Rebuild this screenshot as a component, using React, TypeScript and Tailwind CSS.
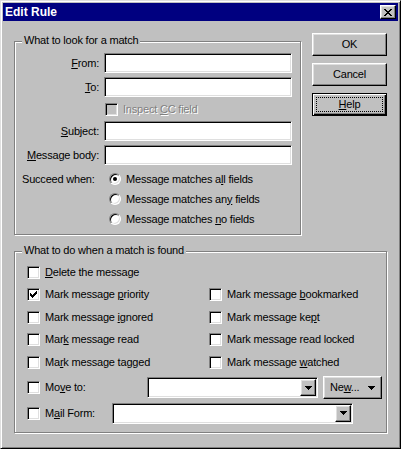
import type { ReactNode } from "react";

const sunken =
  "border border-t-[#808080] border-l-[#808080] border-r-white border-b-white shadow-[inset_1px_1px_0_#000,inset_-1px_-1px_0_#dfdfdf]";
const raised =
  "border border-t-white border-l-white border-r-black border-b-black shadow-[inset_-1px_-1px_0_#808080,inset_1px_1px_0_#dfdfdf]";
const etched = "border border-[#808080] shadow-[inset_1px_1px_0_#fff,1px_1px_0_#fff]";

function U({ children }: { children: ReactNode }) {
  return <span className="underline decoration-1 underline-offset-[1px]">{children}</span>;
}

function Field() {
  return <div className={`h-[20px] w-[188px] bg-white ${sunken}`} />;
}

function Check() {
  // classic 7x7 pixel check mark
  const rows: [number, number, number][] = [
    [6, 0, 1],
    [5, 1, 2],
    [0, 2, 1],
    [4, 2, 3],
    [0, 3, 2],
    [3, 3, 3],
    [0, 4, 5],
    [1, 5, 3],
    [2, 6, 1],
  ];
  return (
    <svg width="7" height="7" viewBox="0 0 7 7" shapeRendering="crispEdges">
      {rows.map(([x, y, w], i) => (
        <rect key={i} x={x} y={y} width={w} height="1" fill="#000" />
      ))}
    </svg>
  );
}

function Box({ checked, disabled }: { checked?: boolean; disabled?: boolean }) {
  return (
    <span
      className={`flex h-[13px] w-[13px] shrink-0 items-center justify-center ${sunken} ${
        disabled ? "bg-[#c0c0c0]" : "bg-white"
      }`}
    >
      {checked ? <Check /> : null}
    </span>
  );
}

function Item({ label, checked }: { label: ReactNode; checked?: boolean }) {
  return (
    <div className="flex items-center gap-[5px]">
      <Box checked={checked} />
      <span>{label}</span>
    </div>
  );
}

function Radio({ on, label }: { on?: boolean; label: ReactNode }) {
  return (
    <div className="flex h-[20px] items-center gap-[5px]">
      <span className={`flex h-[12px] w-[12px] items-center justify-center rounded-full bg-white ${sunken}`}>
        {on ? <span className="h-[4px] w-[4px] rounded-full bg-black" /> : null}
      </span>
      <span>{label}</span>
    </div>
  );
}

function Arrow({ w = 7, h = 4 }: { w?: number; h?: number }) {
  return (
    <svg width={w} height={h} viewBox={`0 0 ${w} ${h}`} shapeRendering="crispEdges">
      <polygon points={`0,0 ${w},0 ${w / 2},${h}`} fill="#000" />
    </svg>
  );
}

function Combo({ width }: { width: string }) {
  return (
    <div className={`flex h-[21px] justify-end bg-white p-[1px] ${sunken} ${width}`}>
      <div className={`flex w-[16px] items-center justify-center bg-[#c0c0c0] ${raised}`}>
        <Arrow />
      </div>
    </div>
  );
}

function Group({ title, className, children }: { title: string; className: string; children: ReactNode }) {
  return (
    <div className={`relative ${etched} ${className}`}>
      <span className="absolute -top-[8px] left-[7px] bg-[#c0c0c0] px-[2px] leading-[13px]">{title}</span>
      {children}
    </div>
  );
}

function Btn({ children, def }: { children: ReactNode; def?: boolean }) {
  return (
    <button
      className={`relative flex h-[23px] w-[75px] items-center justify-center bg-[#c0c0c0] ${
        def
          ? "border border-black shadow-[inset_1px_1px_0_#fff,inset_-1px_-1px_0_#000,inset_-2px_-2px_0_#808080]"
          : raised
      }`}
    >
      {def ? <span className="absolute inset-[3px] border border-dotted border-black" /> : null}
      <span className="relative">{children}</span>
    </button>
  );
}

function CloseGlyph() {
  const rows: [number, number, number][] = [
    [0, 0, 2], [6, 0, 2],
    [1, 1, 2], [5, 1, 2],
    [2, 2, 4],
    [3, 3, 2],
    [2, 4, 4],
    [1, 5, 2], [5, 5, 2],
    [0, 6, 2], [6, 6, 2],
  ];
  return (
    <svg width="8" height="7" viewBox="0 0 8 7" shapeRendering="crispEdges">
      {rows.map(([x, y, w], i) => (
        <rect key={i} x={x} y={y} width={w} height="1" fill="#000" />
      ))}
    </svg>
  );
}

export default function App() {
  return (
    <div
      className={`h-[449px] w-[401px] border border-t-[#dfdfdf] border-l-[#dfdfdf] border-r-black border-b-black bg-[#c0c0c0] p-[2px] font-['Liberation_Sans',Arial,sans-serif] text-[11px] leading-[13px] tracking-[-0.2px] text-black shadow-[inset_1px_1px_0_#fff,inset_-1px_-1px_0_#808080]`}
    >
      {/* title bar */}
      <div className="flex h-[18px] items-center justify-between bg-[#000080] pl-[2px] pr-[2px]">
        <span className="text-[12px] font-bold tracking-normal text-white">Edit Rule</span>
        <span className={`flex h-[14px] w-[16px] items-center justify-center bg-[#c0c0c0] ${raised}`}>
          <CloseGlyph />
        </span>
      </div>

      <div className="flex items-start pl-[11px]">
        <Group title="What to look for a match" className="mt-[20px] h-[194px] w-[287px] pt-[11px]">
          <div className="flex h-[20px] items-center">
            <span className="w-[84px] text-right"><U>F</U>rom:</span>
            <span className="ml-[5px]"><Field /></span>
          </div>
          <div className="mt-[4px] flex h-[20px] items-center">
            <span className="w-[84px] text-right"><U>T</U>o:</span>
            <span className="ml-[5px]"><Field /></span>
          </div>
          <div className="flex h-[24px] items-center pl-[90px] gap-[5px]">
            <Box disabled />
            <span className="text-[#808080] [text-shadow:1px_1px_0_#fff]">Inspect <U>C</U>C field</span>
          </div>
          <div className="flex h-[20px] items-center">
            <span className="w-[84px] text-right"><U>S</U>ubject:</span>
            <span className="ml-[5px]"><Field /></span>
          </div>
          <div className="mt-[4px] flex h-[20px] items-center">
            <span className="w-[84px] text-right"><U>M</U>essage body:</span>
            <span className="ml-[5px]"><Field /></span>
          </div>
          <div className="mt-[4px] flex">
            <span className="flex h-[20px] w-[94px] items-center pl-[7px]">Succeed when:</span>
            <div className="flex flex-col">
              <Radio on label={<>Message matches a<U>l</U>l fields</>} />
              <Radio label={<>Message matches an<U>y</U> fields</>} />
              <Radio label={<>Message matches <U>n</U>o fields</>} />
            </div>
          </div>
        </Group>

        <div className="ml-[11px] mt-[12px] flex flex-col gap-[7px]">
          <Btn>OK</Btn>
          <Btn>Cancel</Btn>
          <Btn def><U>H</U>elp</Btn>
        </div>
      </div>

      <div className="pl-[11px]">
        <Group title="What to do when a match is found" className="mt-[16px] h-[182px] w-[373px] pl-[12px] pt-[9px]">
          <div className="grid grid-cols-[182px_1fr] items-center [grid-template-rows:22px_23px_22px_23px_22px]">
            <Item label={<><U>D</U>elete the message</>} />
            <span />
            <Item checked label={<>Mark message <U>p</U>riority</>} />
            <Item label={<>Mark message <U>b</U>ookmarked</>} />
            <Item label={<>Mark message <U>i</U>gnored</>} />
            <Item label={<>Mark message ke<U>p</U>t</>} />
            <Item label={<>Mar<U>k</U> message read</>} />
            <Item label={<>Mark message read locked</>} />
            <Item label={<>Ma<U>r</U>k message tagged</>} />
            <Item label={<>Mark message <U>w</U>atched</>} />
          </div>
          <div className="mt-[3px] flex h-[23px] items-center">
            <div className="w-[120px]">
              <Item label={<>Mo<U>v</U>e to:</>} />
            </div>
            <Combo width="w-[171px]" />
            <button className={`ml-[5px] flex h-[23px] w-[59px] items-center justify-between bg-[#c0c0c0] pl-[6px] pr-[6px] ${raised}`}>
              <span>Ne<U>w</U>...</span>
              <Arrow w={8} h={4} />
            </button>
          </div>
          <div className="mt-[3px] flex h-[22px] items-center">
            <div className="w-[85px]">
              <Item label={<>M<U>a</U>il Form:</>} />
            </div>
            <Combo width="w-[241px]" />
          </div>
        </Group>
      </div>
    </div>
  );
}
